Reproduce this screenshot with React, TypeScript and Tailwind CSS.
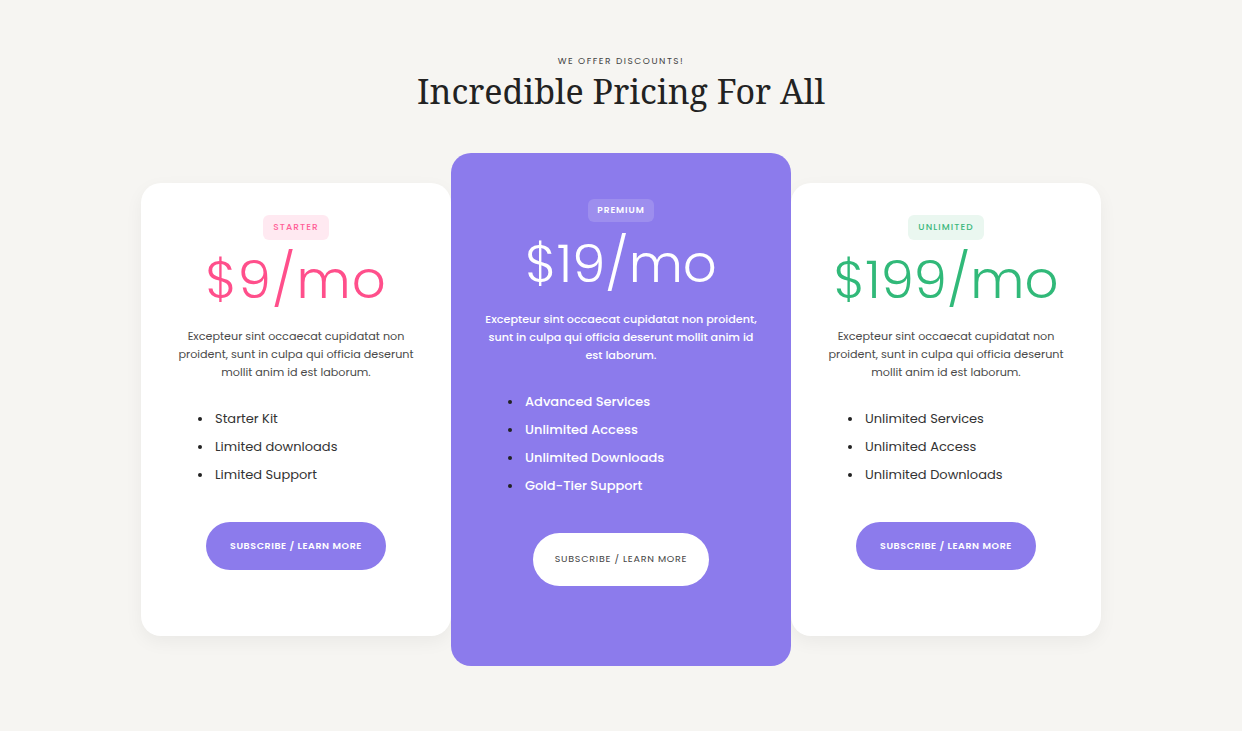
import React from "react";

const sans = { fontFamily: "Poppins, 'Noto Sans', 'Open Sans', sans-serif" };

type Plan = {
  badge: string;
  price: string;
  items: string[];
  color: string;
};

function Bullets({ items, featured }: { items: string[]; featured?: boolean }) {
  return (
    <ul
      className={`mt-[24px] self-stretch pl-[57px] text-[13px] leading-[28px] ${
        featured ? "font-medium text-white" : "text-[#333]"
      }`}
    >
      {items.map((i) => (
        <li key={i} className="flex items-center">
          <span className="w-[4px] h-[4px] rounded-full bg-[#222] shrink-0" />
          <span className="ml-[13px]">{i}</span>
        </li>
      ))}
    </ul>
  );
}

function Card({ plan }: { plan: Plan }) {
  const pink = plan.color === "pink";
  return (
    <div className="w-[310px] h-[453px] bg-white rounded-[20px] flex flex-col items-center pt-[32px] shadow-[0_6px_18px_rgba(0,0,0,0.05)]">
      <div
        className={`h-[25px] px-[10px] rounded-[6px] flex items-center text-[9px] font-medium tracking-[0.12em] ${
          pink ? "bg-[#ffe9f1] text-[#ff5f97]" : "bg-[#eaf7f0] text-[#3cb77d]"
        }`}
      >
        {plan.badge}
      </div>
      <div
        className={`mt-[10px] text-[53px] leading-[60px] font-light ${
          pink ? "text-[#ff4f8b] tracking-[0.02em]" : "text-[#31b979]"
        }`}
      >
        {plan.price}
      </div>
      <p className="mt-[17px] w-[250px] text-center text-[11.2px] leading-[18px] text-[#4a4a4a]">
        Excepteur sint occaecat cupidatat non proident, sunt in culpa qui officia deserunt mollit anim id est laborum.
      </p>
      <Bullets items={plan.items} />
      <button className="mt-[33px] w-[180px] h-[48px] rounded-full bg-[#8c7bec] text-white text-[9.5px] font-semibold tracking-[0.06em]">
        SUBSCRIBE / LEARN MORE
      </button>
    </div>
  );
}

export default function App() {
  return (
    <div className="min-h-[731px] w-full bg-[#f6f5f2] flex flex-col items-center" style={sans}>
      <div className="pt-[55px] text-[9px] leading-[12px] tracking-[0.17em] text-[#444]">WE OFFER DISCOUNTS!</div>
      <h1
        className="mt-[1px] text-[34px] leading-[46px] text-[#222]"
        style={{ fontFamily: "'Noto Serif', 'DejaVu Serif', 'Liberation Serif', serif" }}
      >
        Incredible Pricing For All
      </h1>
      <div className="mt-[39px] flex items-center">
        <Card
          plan={{
            badge: "STARTER",
            price: "$9/mo",
            items: ["Starter Kit", "Limited downloads", "Limited Support"],
            color: "pink",
          }}
        />
        <div className="relative z-10 w-[340px] h-[513px] rounded-[20px] bg-[#8c7bec] flex flex-col items-center pt-[46px]">
          <div className="h-[23px] px-[9px] rounded-[6px] bg-white/15 flex items-center text-[9px] font-semibold tracking-[0.1em] text-white">
            PREMIUM
          </div>
          <div className="mt-[12px] text-[53px] leading-[60px] font-light text-white">$19/mo</div>
          <p className="mt-[16px] w-[280px] text-center text-[11.2px] leading-[18px] font-medium text-white">
            Excepteur sint occaecat cupidatat non proident, sunt in culpa qui officia deserunt mollit anim id est laborum.
          </p>
          <Bullets featured items={["Advanced Services", "Unlimited Access", "Unlimited Downloads", "Gold-Tier Support"]} />
          <button className="mt-[33px] w-[176px] h-[53px] rounded-full bg-white text-[#444] text-[9.5px] tracking-[0.08em]">
            SUBSCRIBE / LEARN MORE
          </button>
        </div>
        <Card
          plan={{
            badge: "UNLIMITED",
            price: "$199/mo",
            items: ["Unlimited Services", "Unlimited Access", "Unlimited Downloads"],
            color: "green",
          }}
        />
      </div>
    </div>
  );
}
